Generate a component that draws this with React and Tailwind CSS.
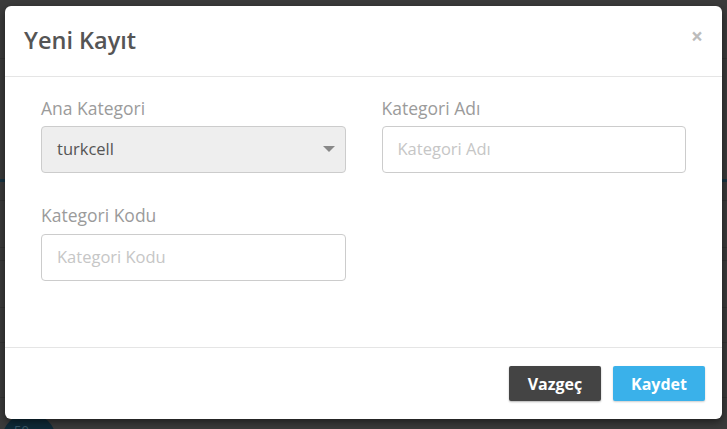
export default function App() {
  return (
    <div
      className="relative w-[727px] h-[429px] bg-[#3b3b3b] overflow-hidden"
      style={{ fontFamily: '"Open Sans", "Noto Sans", sans-serif' }}
    >
      {/* faint page behind overlay */}
      <div className="absolute left-0 top-[179px] w-[727px] h-[3px] bg-[#173443]" />
      <div className="absolute left-0 top-[200px] w-[727px] h-px bg-[#333]" />
      <div className="absolute left-0 top-[247px] w-[727px] h-px bg-[#333]" />
      <div className="absolute left-0 top-[260px] w-[727px] h-px bg-[#333]" />
      <div className="absolute left-0 top-[307px] w-[727px] h-px bg-[#333]" />
      <div className="absolute left-0 top-[342px] w-[727px] h-px bg-[#333]" />
      <div className="absolute left-0 top-[397px] w-[727px] h-px bg-[#333]" />
      <div className="absolute left-0 top-[58px] w-[727px] h-px bg-[#333]" />
      <div className="absolute left-[2px] top-[413px] w-[54px] h-[54px] rounded-full bg-[#0f2a38] text-[#3d5a6a] text-[13px] leading-none pl-[12px] pt-[11px]">50</div>

      {/* modal */}
      <div className="absolute left-[5px] top-[6px] w-[717px] h-[413px] bg-white rounded-[6px] flex flex-col shadow-[0_3px_9px_rgba(0,0,0,0.5)]">
        <div className="h-[71px] border-b border-[#e5e5e5] flex items-center justify-between pl-[19px] pr-[19px] shrink-0">
          <h4 className="text-[23.5px] font-semibold text-[#555] leading-none -mt-[1px]">Yeni Kayıt</h4>
          <span className="text-[#bcbcbc] text-[21px] font-bold leading-none -mt-[10px]">×</span>
        </div>
        <div className="flex-1 px-[36px] pt-[19px]">
          <div className="grid grid-cols-2 gap-x-[36px]">
            <div>
              <div className="text-[17.5px] leading-[24px] text-[#9b9b9b]">Ana Kategori</div>
              <div className="mt-[6px] h-[47px] rounded-[4px] border border-[#cccccc] bg-[#eeeeee] flex items-center justify-between pl-[15px] pr-[10px]">
                <span className="text-[16.5px] text-[#555]">turkcell</span>
                <svg width="12" height="7" viewBox="0 0 12 7"><polygon points="0,0 12,0 6,6" fill="#888" /></svg>
              </div>
            </div>
            <div>
              <div className="text-[17.5px] leading-[24px] text-[#9b9b9b]">Kategori Adı</div>
              <div className="mt-[6px] h-[47px] rounded-[4px] border border-[#cccccc] bg-white flex items-center pl-[15px]">
                <span className="text-[16.5px] text-[#c6c6c6]">Kategori Adı</span>
              </div>
            </div>
            <div className="mt-[30px]">
              <div className="text-[17.5px] leading-[24px] text-[#9b9b9b]">Kategori Kodu</div>
              <div className="mt-[7px] h-[47px] rounded-[4px] border border-[#cccccc] bg-white flex items-center pl-[15px]">
                <span className="text-[16.5px] text-[#c6c6c6]">Kategori Kodu</span>
              </div>
            </div>
          </div>
        </div>
        <div className="h-[72px] border-t border-[#e5e5e5] flex items-center justify-end gap-[12px] pr-[17px] shrink-0">
          <button className="w-[92px] h-[35px] bg-[#444444] text-white font-bold text-[16px] rounded-[2px] shadow-[0_1px_2px_rgba(0,0,0,0.3)]">Vazgeç</button>
          <button className="w-[92px] h-[35px] bg-[#3ab1ea] text-white font-bold text-[16px] rounded-[2px] shadow-[0_1px_2px_rgba(0,0,0,0.2)]">Kaydet</button>
        </div>
      </div>
    </div>
  );
}
